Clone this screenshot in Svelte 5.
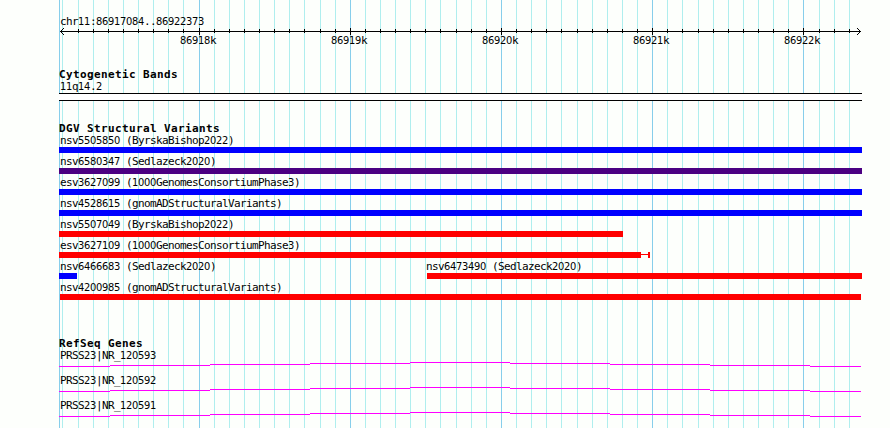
<script lang="ts">
  interface Feature {
    name: string;
    start: number;
    end: number;
    color: string;
    whisker?: number;
  }

  const LEFT = 59;
  const RIGHT = 862;

  // minor gridlines every 100 bp, major every 1 kb
  const grid = Array.from({ length: 53 }, (_, n) => ({
    x: Math.floor(62.93 + n * 15.1224),
    major: n % 10 === 9,
  }));

  const ticks = ['86918k', '86919k', '86920k', '86921k', '86922k'];
  const majors = grid.filter((g) => g.major);

  const rows: Feature[][] = [
    [{ name: 'nsv5505850 (ByrskaBishop2022)', start: 59, end: 862, color: '#0000ff' }],
    [{ name: 'nsv6580347 (Sedlazeck2020)', start: 59, end: 862, color: '#4b0082' }],
    [{ name: 'esv3627099 (1000GenomesConsortiumPhase3)', start: 59, end: 862, color: '#0000ff' }],
    [{ name: 'nsv4528615 (gnomADStructuralVariants)', start: 59, end: 862, color: '#0000ff' }],
    [{ name: 'nsv5507049 (ByrskaBishop2022)', start: 59, end: 623, color: '#ff0000' }],
    [{ name: 'esv3627109 (1000GenomesConsortiumPhase3)', start: 59, end: 641, color: '#ff0000', whisker: 9 }],
    [
      { name: 'nsv6466683 (Sedlazeck2020)', start: 59, end: 77, color: '#0000ff' },
      { name: 'nsv6473490 (Sedlazeck2020)', start: 427, end: 862, color: '#ff0000' },
    ],
    [{ name: 'nsv4200985 (gnomADStructuralVariants)', start: 60, end: 861, color: '#ff0000' }],
  ];

  const genes = ['PRSS23|NR_120593', 'PRSS23|NR_120592', 'PRSS23|NR_120591'];

  // intron line, one pixel step per segment
  const intron = [
    [0, 51, 4],
    [51, 151, 3],
    [151, 251, 2],
    [251, 351, 1],
    [351, 451, 0],
    [451, 551, 1],
    [551, 651, 2],
    [651, 751, 3],
    [751, 802, 4],
  ];
  const intronPath = intron.map(([a, b, y]) => `M${a} ${y}H${b}V${y + 1}H${a}Z`).join('');

  function runs(s: string): string[] {
    return s.match(/\d+|\D+/g) ?? [];
  }
</script>

{#snippet label(text: string)}
  <span class="text">{#each runs(text) as r}<span class:digits={/\d/.test(r)}>{r}</span>{/each}</span>
{/snippet}

<div class="browser">
  <svg class="grid" width="890" height="428" shape-rendering="crispEdges">
    <rect class="major" x={LEFT} y="0" width="1" height="428" />
    {#each grid as g}
      <rect class={g.major ? 'major' : 'minor'} x={g.x} y="0" width="1" height="428" />
    {/each}
  </svg>

  <header class="scale">
    <div class="region">{@render label('chr11:86917084..86922373')}</div>
    <svg class="ruler" width="803" height="7" shape-rendering="crispEdges">
      <rect x="1" y="3" width="801" height="1" />
      {#each grid.slice(1) as g}
        <rect x={g.x - LEFT} y={g.major ? 0 : 1} width="1" height={g.major ? 7 : 4} />
      {/each}
      <path d="M2 2h1v1h-1zM3 1h1v1h-1zM4 0h1v1h-1zM2 4h1v1h-1zM3 5h1v1h-1zM4 6h1v1h-1z" />
      <path d="M800 2h1v1h-1zM799 1h1v1h-1zM798 0h1v1h-1zM800 4h1v1h-1zM799 5h1v1h-1zM798 6h1v1h-1z" />
    </svg>
    <div class="ticks">
      {#each ticks as t, i}
        <span class="tick" style:margin-left="{i === 0 ? majors[0].x - 19 - LEFT : majors[i].x - majors[i - 1].x - 36}px">{@render label(t)}</span>
      {/each}
    </div>
  </header>

  <section class="bands">
    <h2>Cytogenetic Bands</h2>
    <div class="band-name">{@render label('11q14.2')}</div>
    <div class="band"></div>
  </section>

  <section class="variants">
    <h2>DGV Structural Variants</h2>
    {#each rows as row}
      <div class="row">
        {#each row as f, i}
          <div class="feature" style:margin-left="{i === 0 ? f.start - LEFT : 0}px" style:width="{(row[i + 1]?.start ?? RIGHT) - f.start}px">
            <div class="name" class:inner={i > 0} class:inset={f.start === 60}>{@render label(f.name)}</div>
            <div class="glyph">
              <div class="bar" style:width="{f.end - f.start}px" style:background={f.color}></div>
              {#if f.whisker}
                <svg width={f.whisker} height="6" fill={f.color} shape-rendering="crispEdges">
                  <rect x="0" y="2" width={f.whisker} height="1" />
                  <rect x={f.whisker - 2} y="0" width="2" height="6" />
                </svg>
              {/if}
            </div>
          </div>
        {/each}
      </div>
    {/each}
  </section>

  <section class="genes">
    <h2>RefSeq Genes</h2>
    {#each genes as g}
      <div class="gene">
        <div class="name">{@render label(g)}</div>
        <svg width="803" height="5" shape-rendering="crispEdges">
          <path d={intronPath} fill="#ff00ff" />
        </svg>
      </div>
    {/each}
  </section>
</div>

<style>
  :global(body) {
    background: #fdfffc;
  }
  .browser {
    position: relative;
    box-sizing: border-box;
    width: 890px;
    height: 428px;
    padding: 15px 28px 0 59px;
    overflow: hidden;
    background: #fdfffc;
    color: #000;
    font-family: "DejaVu Sans Mono", monospace;
    font-size: 11px;
    line-height: 13px;
  }
  .browser > :not(.grid) {
    position: relative;
  }
  .grid {
    position: absolute;
    top: 0;
    left: 0;
  }
  .major {
    fill: #87ceeb;
  }
  .minor {
    fill: #afeeee;
  }
  svg {
    display: block;
    flex: none;
  }
  .text {
    display: block;
    white-space: pre;
    letter-spacing: -0.622px;
  }
  .digits {
    font-family: "DejaVu Sans Condensed", "DejaVu Sans", sans-serif;
    font-stretch: condensed;
    letter-spacing: -0.299px;
  }
  h2 {
    margin: 0;
    height: 13px;
    font-size: 11px;
    font-weight: bold;
    line-height: 13px;
    letter-spacing: 0.378px;
    white-space: pre;
  }
  .region {
    height: 13px;
    padding-left: 1px;
  }
  .ticks {
    display: flex;
    height: 13px;
    margin-top: -1px;
  }
  .tick {
    width: 36px;
  }
  .bands {
    margin-top: 21px;
  }
  .bands h2 {
    height: 12px;
  }
  .band-name {
    height: 13px;
    padding-left: 1px;
  }
  .band {
    box-sizing: border-box;
    height: 8px;
    border: solid #000;
    border-width: 1px 0;
    background: #fff;
  }
  .variants {
    margin-top: 21px;
  }
  .variants h2 {
    height: 10px;
  }
  .row {
    display: flex;
    height: 21px;
  }
  .feature {
    flex: none;
  }
  .name {
    height: 13px;
    padding: 2px 0 0 1px;
  }
  .name.inner,
  .name.inset {
    padding-left: 0;
  }
  .name.inner {
    margin-left: -1px;
  }
  .glyph {
    display: flex;
    height: 6px;
  }
  .bar {
    height: 6px;
  }
  .genes {
    margin-top: 37px;
  }
  .genes h2 {
    height: 10px;
  }
  .gene {
    height: 25px;
  }
</style>
